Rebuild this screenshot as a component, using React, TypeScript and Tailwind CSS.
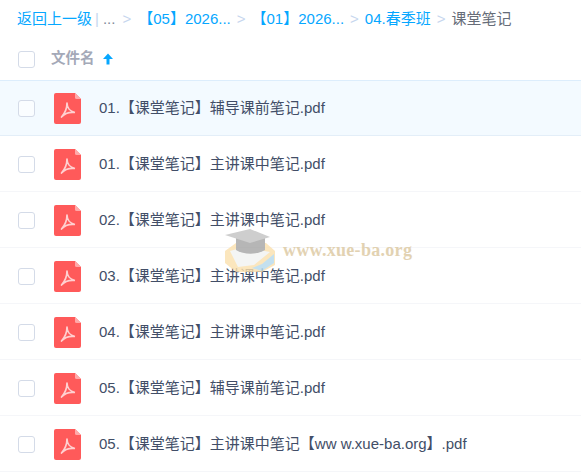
const files = [
  "01.【课堂笔记】辅导课前笔记.pdf",
  "01.【课堂笔记】主讲课中笔记.pdf",
  "02.【课堂笔记】主讲课中笔记.pdf",
  "03.【课堂笔记】主讲课中笔记.pdf",
  "04.【课堂笔记】主讲课中笔记.pdf",
  "05.【课堂笔记】辅导课前笔记.pdf",
  "05.【课堂笔记】主讲课中笔记【ww w.xue-ba.org】.pdf",
];

function PdfIcon() {
  return (
    <svg width="27" height="31" viewBox="0 0 27 31" className="shrink-0">
      <path d="M2 0H21L27 6V29a2 2 0 0 1-2 2H2a2 2 0 0 1-2-2V2a2 2 0 0 1 2-2Z" fill="#ff5a5a" />
      <path d="M21 0L27 6H22.5a1.500 1.500 0 0 1-1.500-1.500Z" fill="#ffa9a9" />
      <path
        d="M13 10C13 14 12 19 7.500 24M13 10C13 14.500 16 18.500 21 19.500C17 19 11.500 19.500 7.500 24"
        fill="none"
        stroke="#ffd0d0"
        strokeWidth="1.700"
        strokeLinecap="round"
      />
    </svg>
  );
}

function Checkbox() {
  return <div className="h-[17px] w-[17px] shrink-0 rounded-[3px] border border-[#d4dbe8] bg-white/60" />;
}

function Watermark() {
  return (
    <div className="absolute left-[224px] top-[227px] flex items-center opacity-80">
      <svg width="54" height="46" viewBox="0 0 54 46">
        <path d="M1 24L12 16H42L51 24V38L38 45L12 45L1 36Z" fill="#fbe0ad" />
        <path d="M6 24L20 20L46 25L30 38L14 40Z" fill="#f2f3f2" />
        <path d="M28 41L38 37L50 27V36L38 44Z" fill="#b5d9ec" />
        <path d="M12 9H41V23C33 28 20 28 12 23Z" fill="#a4a4a4" />
        <path d="M1 8L26 2L46 10L26 16Z" fill="#c2c2c2" />
      </svg>
      <span className="ml-[5px] font-['Liberation_Serif'] text-[18px] font-bold tracking-[0.3px] whitespace-nowrap text-[#dcc8a0]">
        www.xue-ba.org
      </span>
    </div>
  );
}

export default function App() {
  return (
    <div className="relative h-[476px] w-[581px] overflow-hidden bg-white font-['Liberation_Sans','Noto_Sans_CJK_SC',sans-serif] text-[15px]">
      <div className="flex h-[38px] items-center pl-[17px] whitespace-nowrap text-[#06a7ff]">
        <span>返回上一级</span>
        <span className="ml-[3px] text-[#c6d6ee]">|</span>
        <span className="ml-[4px] text-[#818999]">...</span>
        <span className="px-[7px] text-[#c6d6ee]">&gt;</span>
        <span>【05】2026...</span>
        <span className="px-[6px] text-[#c6d6ee]">&gt;</span>
        <span>【01】2026...</span>
        <span className="px-[6px] text-[#c6d6ee]">&gt;</span>
        <span>04.春季班</span>
        <span className="px-[6px] text-[#c6d6ee]">&gt;</span>
        <span className="text-[#666c78]">课堂笔记</span>
      </div>
      <div className="flex h-[42px] items-center pl-[18px]">
        <Checkbox />
        <span className="ml-[16px] text-[14.5px] font-bold text-[#a4a9b8]">文件名</span>
        <svg width="12" height="12" viewBox="0 0 12 12" className="ml-[7px]">
          <path d="M6 0.500L11 6H7.500V11.500H4.500V6H1Z" fill="#06a7ff" />
        </svg>
      </div>
      <div className="border-t border-[#dcedfc]">
        {files.map((name, i) => (
          <div
            key={name}
            className={
              i === 0
                ? "flex h-[55px] items-center border-b border-[#e3eef8] bg-[#f3faff] pl-[18px]"
                : "flex h-[56px] items-center border-b border-[#f5f6f9] pl-[18px] pt-px"
            }
          >
            <Checkbox />
            <div className="ml-[19px]">
              <PdfIcon />
            </div>
            <span className="ml-[18px] whitespace-nowrap text-[#424e67]">{name}</span>
          </div>
        ))}
      </div>
      <Watermark />
    </div>
  );
}
